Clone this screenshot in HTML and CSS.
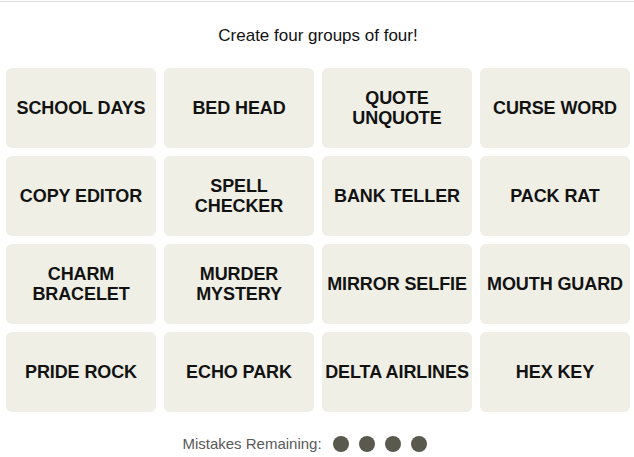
FILE: index.html
```html
<!DOCTYPE html>
<html lang="en">
<head>
<meta charset="utf-8">
<title>Connections</title>
<link rel="stylesheet" href="styles.css">
</head>
<body>
<div class="topline"></div>
<main class="game">
  <p class="prompt">Create four groups of four!</p>
  <div class="board">
    <button class="card">SCHOOL DAYS</button>
    <button class="card">BED HEAD</button>
    <button class="card">QUOTE UNQUOTE</button>
    <button class="card">CURSE WORD</button>
    <button class="card">COPY EDITOR</button>
    <button class="card">SPELL CHECKER</button>
    <button class="card">BANK TELLER</button>
    <button class="card">PACK RAT</button>
    <button class="card">CHARM BRACELET</button>
    <button class="card">MURDER MYSTERY</button>
    <button class="card">MIRROR SELFIE</button>
    <button class="card">MOUTH GUARD</button>
    <button class="card">PRIDE ROCK</button>
    <button class="card">ECHO PARK</button>
    <button class="card">DELTA AIRLINES</button>
    <button class="card">HEX KEY</button>
  </div>
  <div class="mistakes">
    <span class="mistakes-label">Mistakes Remaining:</span>
    <span class="dots">
      <span class="dot"></span>
      <span class="dot"></span>
      <span class="dot"></span>
      <span class="dot"></span>
    </span>
  </div>
</main>
</body>
</html>
```
FILE: styles.css
```css
html, body {
  margin: 0;
  padding: 0;
  background: #ffffff;
}
body {
  font-family: "Liberation Sans", Arial, sans-serif;
  color: #121212;
}
.topline {
  height: 1px;
  margin-top: 1px;
  background: #dcdcdc;
}
.game {
  padding: 0 4px 0 6px;
}
.prompt {
  margin: 24px 0 0;
  font-size: 17px;
  line-height: 20px;
  text-align: center;
  color: #121212;
}
.board {
  margin-top: 22px;
  display: grid;
  grid-template-columns: repeat(4, 150px);
  grid-auto-rows: 80px;
  gap: 8px;
}
.card {
  border: 0;
  margin: 0;
  padding: 0;
  border-radius: 6px;
  background: #efefe6;
  color: #121212;
  font-family: "Liberation Sans", Arial, sans-serif;
  font-weight: 700;
  font-size: 18px;
  line-height: 20px;
  letter-spacing: -0.1px;
  text-align: center;
  display: flex;
  align-items: center;
  justify-content: center;
}
.mistakes {
  margin-top: 24px;
  display: flex;
  align-items: center;
  justify-content: center;
  gap: 11px;
  padding-right: 27px;
  height: 16px;
}
.mistakes-label {
  font-size: 15px;
  line-height: 16px;
  color: #5a5a5a;
}
.dots {
  display: flex;
  gap: 10px;
}
.dot {
  width: 16px;
  height: 16px;
  border-radius: 50%;
  background: #5a594e;
}
```
